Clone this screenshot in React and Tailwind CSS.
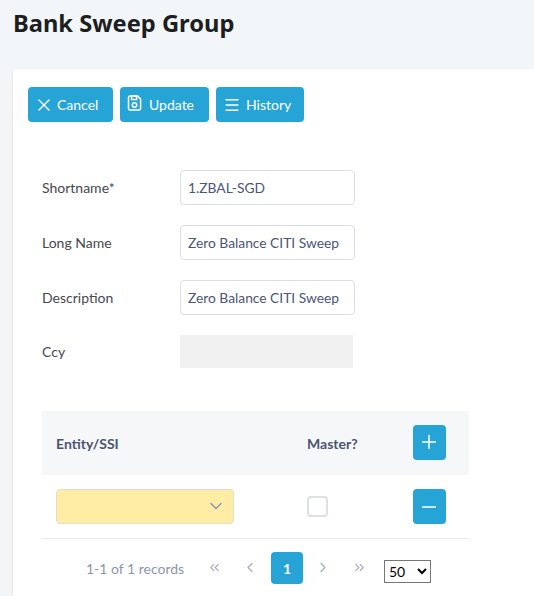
import React from "react";
import { Menu, X, Plus, Minus, ChevronDown, ChevronLeft, ChevronRight, ChevronsLeft, ChevronsRight } from "lucide-react";

function SaveIcon() {
  return (
    <svg width="15" height="16" viewBox="0 0 15 16" fill="none" stroke="currentColor" strokeWidth="1.5" className="-mt-[3px]">
      <path d="M1.5 2.6a1.5 1.5 0 0 1 1.5-1.5h7.6l3 3v9.3a1.5 1.5 0 0 1-1.5 1.5H3a1.5 1.5 0 0 1-1.5-1.5z" />
      <rect x="4.6" y="1.2" width="5" height="3.3" />
      <circle cx="7.5" cy="10" r="2.2" />
    </svg>
  );
}

function ActionButton({ icon, label, width, gap }) {
  return (
    <button className={`flex items-center h-[35px] pl-[7px] bg-[#26a4d5] rounded text-white text-[14px] ${width} ${gap}`}>
      {icon}
      <span>{label}</span>
    </button>
  );
}

function Field({ label, value, mb = "mb-5" }) {
  return (
    <div className={`flex items-center ${mb}`}>
      <label className="w-[138px] text-[14px] text-[#46474f]">{label}</label>
      <input
        readOnly
        value={value}
        className="w-[175px] h-[35px] px-[7px] bg-white border border-[#d9dee8] rounded text-[13.8px] text-[#4a5578] outline-none"
      />
    </div>
  );
}

export default function App() {
  return (
    <div className="h-[596px] overflow-hidden bg-[#f3f6f9] font-['Lato',sans-serif]">
      <h1 className="h-[69px] pl-[13px] pt-[5px] font-['Noto_Sans',sans-serif] text-[23.7px] leading-[36px] font-bold text-[#1c1e21]">Bank Sweep Group</h1>

      <div className="ml-[13px] h-[527px] bg-white rounded-tl pl-[15px] pt-[18px] shadow-sm">
        {/* toolbar */}
        <div className="flex gap-[7px]">
          <ActionButton label="Cancel" width="w-[85px]" gap="gap-[3px]" icon={<X size={20} strokeWidth={1.6} className="-ml-[1px]" />} />
          <ActionButton label="Update" width="w-[89px]" gap="gap-[7px]" icon={<SaveIcon />} />
          <ActionButton label="History" width="w-[88px]" gap="gap-[5px]" icon={<Menu size={18} strokeWidth={1.8} />} />
        </div>

        {/* form */}
        <div className="ml-[14px] mt-[48px]">
          <Field label="Shortname*" value="1.ZBAL-SGD" />
          <Field label="Long Name" value="Zero Balance CITI Sweep" />
          <Field label="Description" value="Zero Balance CITI Sweep" />
          <div className="flex items-center">
            <label className="w-[138px] text-[14px] text-[#46474f]">Ccy</label>
            <div className="w-[173px] h-[33px] bg-[#f1f1f1]" />
          </div>
        </div>

        {/* grid */}
        <div className="ml-[14px] mt-[43px] w-[427px]">
          <div className="flex items-center h-[64px] bg-[#f6f7f9] pl-[14px]">
            <span className="w-[251px] text-[14px] font-bold text-[#4a5570]">Entity/SSI</span>
            <span className="w-[106px] text-[14px] font-bold text-[#4a5570]">Master?</span>
            <button className="flex items-center justify-center w-[33px] h-[35px] -mt-[2px] bg-[#26a4d5] rounded text-white">
              <Plus size={22} strokeWidth={1.6} className="-ml-[1px]" />
            </button>
          </div>
          <div className="flex items-center h-[64px] pl-[14px] border-b border-[#e8e9ec]">
            <div className="flex items-center justify-end w-[178px] h-[35px] pr-[10px] bg-[#ffeda6] border border-[#e0dfce] rounded">
              <ChevronDown size={20} strokeWidth={1.8} className="-mr-[3px] -mt-[1px] text-[#9298a8]" />
            </div>
            <div className="flex items-center w-[179px] pl-[73px]">
              <div className="w-[21px] h-[21px] border-2 border-[#dde0e8] rounded bg-white" />
            </div>
            <button className="flex items-center justify-center w-[33px] h-[35px] bg-[#26a4d5] rounded text-white">
              <Minus size={22} strokeWidth={1.6} className="-ml-[1px]" />
            </button>
          </div>

          {/* pager */}
          <div className="flex items-center h-[57px] text-[#a3abbd]">
            <span className="ml-[44px] w-[118px] text-[14px] text-[#8d95ab] mt-[1px]">1-1 of 1 records</span>
            <span className="flex justify-center w-[21px]"><ChevronsLeft size={15} strokeWidth={1.8} /></span>
            <span className="flex justify-center w-[16px] ml-[17px]"><ChevronLeft size={17} strokeWidth={1.8} /></span>
            <span className="flex items-center justify-center w-[32px] h-[32px] ml-[13px] mt-[1px] bg-[#26a4d5] rounded text-white text-[14px] font-bold">1</span>
            <span className="flex justify-center w-[16px] ml-[12px]"><ChevronRight size={17} strokeWidth={1.8} /></span>
            <span className="flex justify-center w-[21px] ml-[18px]"><ChevronsRight size={15} strokeWidth={1.8} /></span>
            <select className="ml-[14px] mt-[8px] w-[47px] h-[23px] border border-[#767676] bg-white text-[14px] text-black">
              <option>50</option>
            </select>
          </div>
        </div>
      </div>
    </div>
  );
}
